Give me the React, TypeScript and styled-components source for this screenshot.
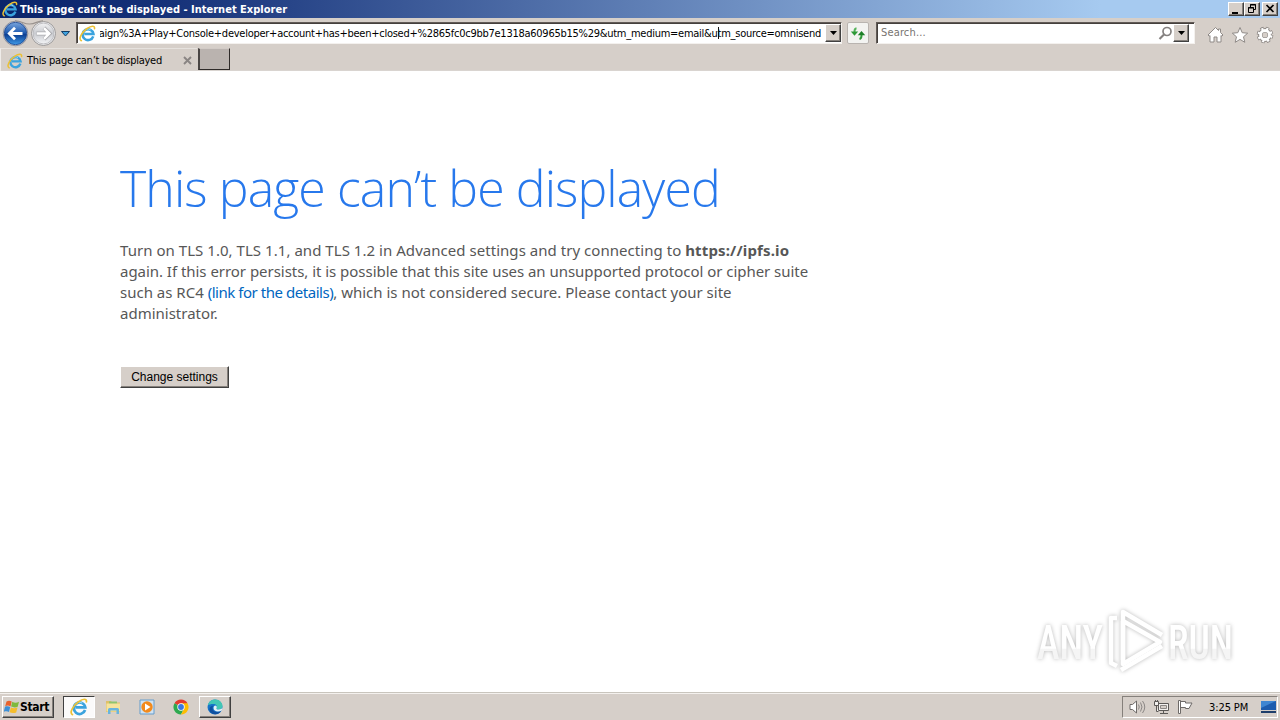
import styled, { createGlobalStyle, css } from "styled-components";

const GlobalStyle = createGlobalStyle`
  * {
    box-sizing: border-box;
  }
  body {
    margin: 0;
    background: #ffffff;
    overflow: hidden;
  }
`;

const uiFont = css`
  font-family: "DejaVu Sans Condensed", "DejaVu Sans", sans-serif;
  font-stretch: condensed;
  font-size: 11px;
`;

const raised = css`
  background: #d6cfc9;
  border: 1px solid;
  border-color: #ffffff #404040 #404040 #ffffff;
  box-shadow: inset -1px -1px 0 #85807b;
`;

const Screen = styled.div`
  display: flex;
  flex-direction: column;
  width: 1280px;
  height: 720px;
  position: relative;
  background: #ffffff;
  ${uiFont}
`;

const TitleBar = styled.div`
  display: flex;
  align-items: center;
  height: 18px;
  padding: 0 2px;
  background: linear-gradient(90deg, #0a246a 0%, #17337a 14%, #a6caf0 86%);
`;

const Title = styled.span<{ $spacing: number }>`
  flex: 1;
  margin-left: 2px;
  color: #ffffff;
  font-weight: bold;
  letter-spacing: ${(p) => p.$spacing}px;
  white-space: nowrap;
`;

const WindowButton = styled.div<{ $gap?: number }>`
  ${raised}
  display: flex;
  width: 16px;
  height: 14px;
  margin-left: ${(p) => p.$gap || 0}px;
`;

const Chrome = styled.div`
  display: flex;
  flex-direction: column;
  height: 53px;
  background: #d6cfc9;
`;

const NavRow = styled.div`
  display: flex;
  align-items: flex-start;
  height: 30px;
  padding: 2px 0 0 2px;
`;

const NavButtons = styled.div`
  display: flex;
  width: 74px;
  height: 28px;
`;

const Field = styled.div<{ $width: number }>`
  display: flex;
  align-items: center;
  width: ${(p) => p.$width}px;
  height: 22px;
  margin-top: 2px;
  padding-left: 2px;
  background: #ffffff;
  border: 1px solid;
  border-color: #615a56 #f4f1ee #f4f1ee #615a56;
  box-shadow: inset 1px 1px 0 #45403d;
`;

const Url = styled.div`
  position: relative;
  display: flex;
  justify-content: flex-end;
  flex: 1;
  height: 18px;
  line-height: 20px;
  margin: 0 4px 0 4px;
  overflow: hidden;
  white-space: nowrap;
  color: #000000;
  letter-spacing: -0.26px;
`;

const Beam = styled.i`
  position: absolute;
  right: 102px;
  top: 3px;
  width: 1px;
  height: 12px;
  background: #111111;
`;

const DropButton = styled.div<{ $gap?: number }>`
  ${raised}
  display: flex;
  align-items: center;
  justify-content: center;
  width: 16px;
  height: 18px;
  margin-right: ${(p) => p.$gap || 0}px;
`;

const Refresh = styled.div`
  display: flex;
  align-items: center;
  justify-content: center;
  width: 22px;
  height: 22px;
  margin: 2px 7px 0 5px;
  background: #f3f3f1;
  border: 1px solid #b9b4b0;
  border-radius: 2px;
`;

const Placeholder = styled.span`
  flex: 1;
  margin-left: 2px;
  color: #77736f;
  letter-spacing: 0.15px;
  line-height: 20px;
`;

const Tools = styled.div`
  display: flex;
  gap: 7px;
  margin: 6px 0 0 12px;
`;

const TabRow = styled.div`
  display: flex;
  height: 23px;
  border-bottom: 1px solid #d9d4d0;
`;

const Tab = styled.div`
  display: flex;
  align-items: center;
  width: 197px;
  height: 23px;
  padding: 1px 5px 0 6px;
  border-left: 1px solid #efece9;
  border-top: 1px solid #e6e2de;
`;

const TabLabel = styled.span`
  flex: 1;
  margin-left: 4px;
  color: #000000;
  white-space: nowrap;
  letter-spacing: -0.26px;
`;

const NewTab = styled.div`
  width: 32px;
  height: 22px;
  background: #bab3af;
  border: 1px solid;
  border-width: 1px 1px 1px 2px;
  border-color: #d2cbc6 #2e2a28 #2e2a28 #4a4644;
  margin-left: 1px;
`;

const Page = styled.main`
  flex: 1;
  padding: 87px 0 0 120px;
  background: #ffffff;
`;

const Heading = styled.h1`
  margin: 0;
  height: 82px;
  line-height: 60px;
  font-family: "Open Sans", "Noto Sans", sans-serif;
  font-stretch: normal;
  font-size: 50px;
  font-weight: 300;
  color: #2778ec;
  letter-spacing: -0.9px;
  white-space: nowrap;
`;

const Message = styled.div`
  height: 126px;
  font-family: "Noto Sans", "Open Sans", sans-serif;
  font-stretch: normal;
  font-size: 15px;
  line-height: 21px;
  color: #575757;
`;

const Line = styled.div<{ $spacing?: number }>`
  letter-spacing: ${(p) => p.$spacing || 0}px;
  white-space: nowrap;
`;

const Host = styled.b`
  letter-spacing: 0.15px;
`;

const DetailLink = styled.a`
  color: #0066bf;
  letter-spacing: -0.46px;
`;

const SettingsButton = styled.button`
  ${raised}
  width: 109px;
  height: 22px;
  padding: 0;
  font-family: "Liberation Sans", Arial, sans-serif;
  font-size: 12px;
  color: #000000;
`;

const Watermark = styled.svg`
  position: absolute;
  left: 1028px;
  top: 600px;
  filter: drop-shadow(0 0 2px rgba(0, 0, 0, 0.28));
`;

const Taskbar = styled.footer`
  display: flex;
  align-items: center;
  height: 28px;
  padding: 1px 2px 0 2px;
  background: #d6cfc9;
  border-top: 1px solid #c9c5bd;
  box-shadow: inset 0 1px 0 #f4f1ee;
`;

const StartButton = styled.div`
  ${raised}
  display: flex;
  align-items: center;
  width: 52px;
  height: 22px;
  padding-left: 1px;
  margin-right: 9px;
  font-size: 12px;
  font-weight: bold;
  letter-spacing: -0.35px;
`;

const TaskItem = styled.div<{ $state?: "active" | "open" }>`
  display: flex;
  align-items: center;
  justify-content: center;
  width: 32px;
  height: 22px;
  margin-right: 2px;
  ${(p) => p.$state === "open" && raised}
  ${(p) =>
    p.$state === "active" &&
    css`
      background: #fbfafa;
      border: 1px solid;
      border-color: #404040 #ffffff #ffffff #404040;
    `}
`;

const Tray = styled.div`
  display: flex;
  align-items: center;
  gap: 7px;
  width: 156px;
  height: 22px;
  margin-left: auto;
  padding-left: 6px;
  border: 1px solid;
  border-color: #85807b #ffffff #ffffff #85807b;
`;

const Clock = styled.span`
  flex: 1;
  margin-left: 8px;
  white-space: nowrap;
  letter-spacing: -0.1px;
`;

const IeIcon = ({ size }: { size: number }) => (
  <svg width={size} height={size} viewBox="0 0 16 16" fill="none">
    <path
      d="M13.400 10.700A5.100 5.100 0 1 1 13.600 8.400H5"
      stroke="#3ba3de"
      strokeWidth="2.400"
    />
    <path d="M4.200 6.400A4.600 4.600 0 0 1 11 4.600" stroke="#9adcf8" strokeWidth="0.9" />
    <path
      d="M2.200 14.800C-1 13 3 6.500 7.600 3.300C11.500.6 15 .2 14.600 3.400"
      stroke="#ecc034"
      strokeWidth="1.500"
      strokeLinecap="round"
    />
  </svg>
);

const DownArrow = () => (
  <svg width="7" height="4" viewBox="0 0 7 4">
    <path d="M0 0h7L3.500 4z" fill="#000" />
  </svg>
);

const NavArrows = () => (
  <svg width="70" height="28" viewBox="0 0 70 28" fill="none">
    <defs>
      <linearGradient id="back" x1="0" y1="0" x2="0" y2="1">
        <stop offset="0" stopColor="#7aa5dc" />
        <stop offset="0.45" stopColor="#2560b4" />
        <stop offset="0.55" stopColor="#0c3f93" />
        <stop offset="1" stopColor="#3f9be8" />
      </linearGradient>
      <linearGradient id="fwd" x1="0" y1="0" x2="0" y2="1">
        <stop offset="0" stopColor="#f2f2f3" />
        <stop offset="0.5" stopColor="#c9cbd0" />
        <stop offset="1" stopColor="#f3f4f6" />
      </linearGradient>
    </defs>
    <path
      d="M13 .8C20 .8 21 4 27.500 4S35 .8 41 .8"
      stroke="#99928e"
      strokeWidth="1.200"
    />
    <circle cx="13.500" cy="13.500" r="12.300" fill="#e9e9ee" stroke="#8f9098" />
    <circle cx="13.500" cy="13.500" r="11.200" fill="url(#back)" stroke="#17408a" strokeWidth=".8" />
    <path d="M20.500 13.500H8M13 7.800L7.300 13.500L13 19.200" stroke="#fff" strokeWidth="2.800" />
    <circle cx="41.500" cy="13.500" r="12" fill="#ececee" stroke="#9b9999" />
    <circle cx="41.500" cy="13.500" r="10.400" fill="url(#fwd)" stroke="#b4b4b8" strokeWidth=".8" />
    <path d="M34.500 13.500H47M42 7.800L47.700 13.500L42 19.200" stroke="#a9a9ad" strokeWidth="3.800" />
    <path d="M34.800 13.500H47M42 8.200L47.300 13.500L42 18.800" stroke="#fff" strokeWidth="2.500" />
    <path d="M59.500 11.500h8l-4 4.500z" fill="#3fa3e0" stroke="#123d66" />
  </svg>
);

const App = () => {
  return (
    <>
      <GlobalStyle />
      <Screen>
        <TitleBar>
          <IeIcon size={16} />
          <Title $spacing={0.01}>This page can’t be displayed - Internet Explorer</Title>
          <WindowButton>
            <svg width="14" height="12">
              <path d="M3 9h6v2H3z" fill="#000" />
            </svg>
          </WindowButton>
          <WindowButton>
            <svg width="14" height="12" fill="none" stroke="#000">
              <path d="M5.500 4V1.500h5v5H9M5 2h6M3.500 4.500h5v5h-5zM3 5h6" />
            </svg>
          </WindowButton>
          <WindowButton $gap={2}>
            <svg width="14" height="12" stroke="#000" strokeWidth="1.700">
              <path d="M3.500 2l7 7M10.500 2l-7 7" />
            </svg>
          </WindowButton>
        </TitleBar>

        <Chrome>
          <NavRow>
            <NavButtons>
              <NavArrows />
            </NavButtons>
            <Field $width={766}>
              <IeIcon size={17} />
              <Url>
                aign%3A+Play+Console+developer+account+has+been+closed+%2865fc0c9bb7e1318a60965b15%29&amp;utm_medium=email&amp;utm_source=omnisend
                <Beam />
              </Url>
              <DropButton>
                <DownArrow />
              </DropButton>
            </Field>
            <Refresh>
              <svg width="16" height="15" viewBox="0 0 16 15" fill="none">
                <path d="M6.500 2.200Q4.500 2.500 4.500 5.500V6" stroke="#56b35c" strokeWidth="2" />
                <path d="M.8 5.500H8.200L4.500 9.800z" fill="#2f9a38" />
                <path d="M9.500 13Q11.500 12.500 11.500 9.500V9" stroke="#2f9a38" strokeWidth="2" />
                <path d="M7.800 9.300H15.200L11.500 5z" fill="#1c7f27" />
              </svg>
            </Refresh>
            <Field $width={319}>
              <Placeholder>Search...</Placeholder>
              <svg width="15" height="15" viewBox="0 0 15 15" fill="none" stroke="#858180">
                <circle cx="9" cy="5.500" r="4" strokeWidth="1.700" />
                <path d="M6 8.500L1.500 13" strokeWidth="2.200" />
              </svg>
              <DropButton $gap={5}>
                <DownArrow />
              </DropButton>
            </Field>
            <Tools>
              <svg width="17" height="18" viewBox="0 0 17 18" fill="#fff" stroke="#8f8a87">
                <path d="M8.500 1.500L1 9l1.200 1.200L3 9.500V16h4v-5h3v5h4V9.500l.8.7L16 9l-2.500-2.500V3h-2v1.500z" />
              </svg>
              <svg width="18" height="18" viewBox="0 0 18 18" fill="#fff" stroke="#8f8a87">
                <path d="M9 1.500l2.200 5.200 5.500.5-4.200 3.600 1.300 5.500L9 13.400l-4.800 2.900 1.300-5.500L1.300 7.200l5.500-.5z" />
              </svg>
              <svg width="18" height="18" viewBox="0 0 18 18" fill="none">
                <circle cx="9" cy="9" r="6.500" stroke="#8f8a87" strokeWidth="3.600" strokeDasharray="3.100 2" />
                <circle cx="9" cy="9" r="4.700" stroke="#8f8a87" strokeWidth="4.400" />
                <circle cx="9" cy="9" r="6.200" stroke="#fff" strokeWidth="2.600" strokeDasharray="2 2.870" strokeDashoffset="-.5" />
                <circle cx="9" cy="9" r="4.500" stroke="#fff" strokeWidth="2.800" />
              </svg>
            </Tools>
          </NavRow>
          <TabRow>
            <Tab>
              <IeIcon size={16} />
              <TabLabel>This page can’t be displayed</TabLabel>
              <svg width="9" height="9" stroke="#8a8583" strokeWidth="1.900">
                <path d="M1 1l7 7M8 1L1 8" />
              </svg>
            </Tab>
            <NewTab />
          </TabRow>
        </Chrome>

        <Page>
          <Heading>This page can’t be displayed</Heading>
          <Message>
            <Line $spacing={0.04}>
              Turn on TLS 1.0, TLS 1.1, and TLS 1.2 in Advanced settings and try connecting to{" "}
              <Host>https://ipfs.io</Host>
            </Line>
            <Line $spacing={-0.035}>
              again. If this error persists, it is possible that this site uses an unsupported protocol or cipher suite
            </Line>
            <Line>
              such as RC4 <DetailLink>(link for the details)</DetailLink>, which is not
              considered secure. Please contact your site
            </Line>
            <Line>administrator.</Line>
          </Message>
          <SettingsButton>Change settings</SettingsButton>
        </Page>

        <Watermark width="240" height="82" viewBox="0 0 240 82">
          <defs>
            <linearGradient id="mark" x1="0" y1="0" x2="0" y2="1">
              <stop offset="0.6" stopColor="#ffffff" />
              <stop offset="0.62" stopColor="#f5f5f5" />
            </linearGradient>
          </defs>
          <g
            fill="url(#mark)"
            fontFamily="Roboto, sans-serif"
            fontSize="49"
            fontWeight="500"
          >
            <text x="9" y="59" textLength="66" lengthAdjust="spacingAndGlyphs">ANY</text>
            <text x="140" y="59" textLength="65" lengthAdjust="spacingAndGlyphs">RUN</text>
          </g>
          <g fill="none" stroke="#fff" strokeWidth="4.500" strokeLinejoin="round">
            <path d="M95 60V12L134 35" />
            <path d="M95 21L132 42L95 64V21" />
            <path d="M89 18H83V63L89 66" />
            <path d="M93 70L134 46" />
          </g>
        </Watermark>

        <Taskbar>
          <StartButton>
            <svg width="16" height="16" viewBox="0 0 16 16">
              <path d="M2.500 2.500C4.500 1.200 6 1.500 7.700 2.500L6.500 7.400C4.800 6.400 3 6.400 1.200 7.200z" fill="#e8622c" />
              <path d="M8.300 2.800C10.500 4 12.500 4 15 2.800L13.700 7.700C11.500 8.800 9.500 8.600 7.100 7.600z" fill="#7fb93c" />
              <path d="M1 7.800C3 7 4.700 7.200 6.200 8.100L5 13C3.500 12 1.500 12-.3 12.800z" fill="#3d8fd6" />
              <path d="M6.900 8.400C9 9.500 11 9.500 13.500 8.400L12.200 13.400C10 14.400 7.800 14.300 5.600 13.300z" fill="#f5bd2c" />
            </svg>
            Start
          </StartButton>
          <TaskItem $state="active">
            <IeIcon size={18} />
          </TaskItem>
          <TaskItem>
            <svg width="17" height="16" viewBox="0 0 17 16">
              <path d="M1 2h5l1 1.500h8V13H1z" fill="#dfc068" />
              <path d="M4 2.500h8v3H4z" fill="#8fc46d" />
              <path d="M1.500 4.500h13.500v8H1.500z" fill="#f6e39c" />
              <path d="M3 15V10.500Q3 9 4.500 9h8Q14 9 14 10.500V15h-2.500v-3.500h-6V15z" fill="#69b4dd" />
            </svg>
          </TaskItem>
          <TaskItem>
            <svg width="16" height="16" viewBox="0 0 16 16">
              <path d="M1 1h14v14H1z" fill="#cfe2f2" stroke="#649dcc" />
              <circle cx="8" cy="8" r="5.700" fill="#f28a1c" />
              <path d="M6 4.500L11.500 8L6 11.500z" fill="#fff" />
            </svg>
          </TaskItem>
          <TaskItem>
            <svg width="16" height="16" viewBox="0 0 16 16">
              <path d="M8 8L1.500 4.250A7.500 7.500 0 0 1 14.500 4.250z" fill="#e33b2e" />
              <path d="M8 8L1.500 4.250A7.500 7.500 0 0 0 8 15.500L11 9.500z" fill="#2da94f" />
              <path d="M8 4.250H14.500A7.500 7.500 0 0 1 8 15.500L11.200 9.800z" fill="#fdbd00" />
              <circle cx="8" cy="8" r="3.700" fill="#fff" />
              <circle cx="8" cy="8" r="2.900" fill="#3a78e0" />
            </svg>
          </TaskItem>
          <TaskItem $state="open">
            <svg width="16" height="16" viewBox="0 0 16 16">
              <circle cx="8" cy="8" r="7.500" fill="#1673c9" />
              <path d="M.7 6.500C2 2 5 .5 8.300.5C13 .5 15.500 4 15.500 7C15.500 9.500 13.500 10.500 11.500 10.500C9.500 10.500 9 9.800 9.700 8.700C10.500 7 9 5 6.500 5C4 5 1.500 5.500.7 6.500z" fill="#43c6b5" />
              <path d="M5.500 9C5.500 12.500 9 14 14 12C12 15.500 8 16 5 14.500C1 12 2 7 6.500 6.500C5.700 7.200 5.500 8 5.500 9z" fill="#0f4f9f" />
              <path d="M9.700 8.700C9 9.800 9.500 10.500 11.500 10.500C13.500 10.500 15 9.800 15.500 8.500L14.800 11.500C11 13.500 6.500 12.500 6.500 9C6.500 8 7 7 8 6.500C9.500 6.700 10.200 7.700 9.700 8.700z" fill="#e4f1f7" />
            </svg>
          </TaskItem>
          <Tray>
            <svg width="17" height="16" viewBox="0 0 17 16" fill="#fff" stroke="#6e6a68">
              <path d="M1 5.500h2.500L7.500 2v12L3.500 10.500H1z" />
              <path d="M9.500 5.500q1.500 2.500 0 5M11.500 3.500q3 4.500 0 9M13.500 2q4.500 6 0 12" fill="none" stroke="#8b8785" />
            </svg>
            <svg width="17" height="16" viewBox="0 0 17 16" fill="#f2f0ee" stroke="#5c5957">
              <path d="M5.500 4.500h10v7h-10zM7 14.500h8M10.500 11.500v3" />
              <path d="M7.500 6.500h6v3h-6z" fill="#d6cfc9" stroke="#8b8785" />
              <path d="M1.500 2.500h4v4h-4zM2.500 1v1.500M4.500 1v1.500M3.500 6.500v6h2" />
            </svg>
            <svg width="17" height="16" viewBox="0 0 17 16" fill="#fff" stroke="#6e6a68">
              <path d="M1.500 1.500h2v13h-2zM3.500 2.500h5v1.500h6.500l-3 5.500H8.500V8.500h-5z" />
            </svg>
            <Clock>3:25 PM</Clock>
            <svg width="17" height="14" viewBox="0 0 17 14">
              <path d="M1 1h15v9H1z" fill="#1d5cae" />
              <path d="M1 1h15L1 8z" fill="#3f86d2" />
              <path d="M1 11h15v2H1z" fill="#1f3e6b" />
            </svg>
          </Tray>
        </Taskbar>
      </Screen>
    </>
  );
};

export default App;
